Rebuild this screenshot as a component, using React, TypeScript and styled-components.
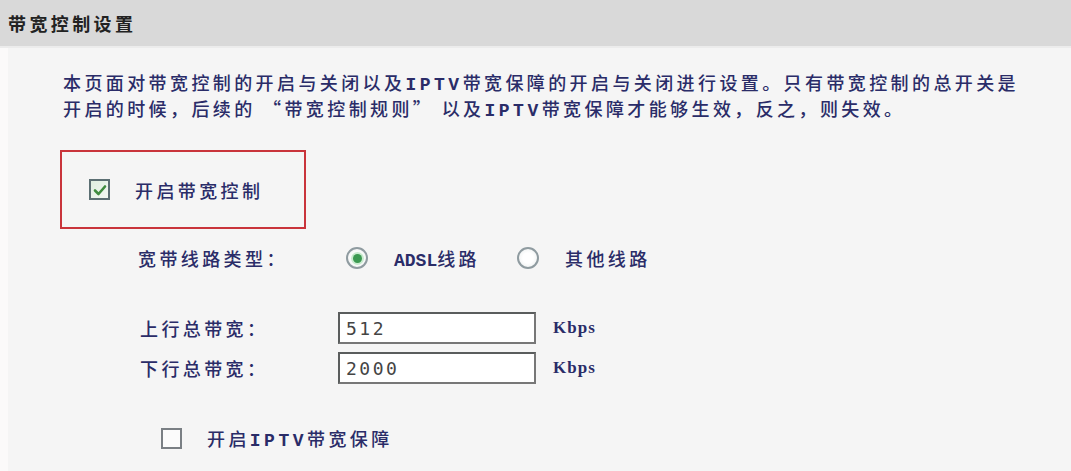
import styled, { createGlobalStyle } from "styled-components";

const GlobalStyle = createGlobalStyle`
  body {
    margin: 0;
    background-color: #f5f5f5;
    font-family: "Noto Sans CJK SC", "Noto Sans", sans-serif;
  }
`;

const Page = styled.div`
  width: 1071px;
  height: 471px;
  overflow: hidden;
  display: flex;
  flex-direction: column;
  background: linear-gradient(to right, #fbfafa 0, #fbfafa 8px, #f5f5f5 8px);
`;

const HeaderBar = styled.div`
  height: 46px;
  display: flex;
  align-items: center;
  padding-left: 8px;
  background-color: #d9d9d9;
  border-bottom: 2px solid #ececec;
  font-size: 18px;
  font-weight: 700;
  letter-spacing: 3.4px;
  color: #222;
`;

const Content = styled.div`
  display: flex;
  flex-direction: column;
  padding-left: 60px;
`;

const Intro = styled.div`
  margin: 21px 0 0 3px;
  display: flex;
  flex-direction: column;
`;

const IntroLine = styled.div`
  height: 26px;
  line-height: 26px;
  font-size: 18px;
  letter-spacing: 3.4px;
  font-weight: 500;
  color: #2a2c68;
  white-space: nowrap;
`;

const Latin = styled.span<{ $tight?: boolean }>`
  font-family: "Liberation Mono", monospace;
  font-weight: 700;
  line-height: 1;
  letter-spacing: ${(p) => (p.$tight ? "0" : "3.5px")};
`;

const HighlightBox = styled.div`
  box-sizing: border-box;
  width: 246px;
  height: 79px;
  margin-top: 29px;
  border: 2px solid #c9343b;
  display: flex;
  align-items: center;
  gap: 25px;
  padding-left: 27px;
`;

const CheckBox = styled.span<{ $checked?: boolean }>`
  box-sizing: border-box;
  width: 21px;
  height: 21px;
  display: inline-flex;
  align-items: center;
  justify-content: center;
  border: 2px solid ${(p) => (p.$checked ? "#5c6f73" : "#7a7f84")};
  background: ${(p) => (p.$checked ? "linear-gradient(135deg, #dfeee0, #f3f8f2)" : "#fbfbfb")};
  flex-shrink: 0;
`;

const Label = styled.span<{ $width?: number }>`
  display: inline-block;
  height: 26px;
  line-height: 26px;
  font-size: 18px;
  letter-spacing: 3.4px;
  font-weight: 500;
  color: #2a2c68;
  white-space: nowrap;
  ${(p) => (p.$width ? `width: ${p.$width}px;` : "")}
`;

const Settings = styled.div`
  display: flex;
  flex-direction: column;
  padding-left: 78px;
`;

const RadioRow = styled.div`
  display: flex;
  align-items: center;
  height: 26px;
  margin-top: 16px;
`;

const RadioOption = styled.label`
  display: flex;
  align-items: center;
  gap: 26px;
  margin-right: 37px;
`;

const Radio = styled.span<{ $checked?: boolean }>`
  box-sizing: border-box;
  width: 22px;
  height: 22px;
  border-radius: 50%;
  border: 2px solid #8f9ba0;
  background: radial-gradient(circle, #ffffff 40%, #e8ecec 100%);
  display: inline-flex;
  align-items: center;
  justify-content: center;
  &::after {
    content: "";
    display: ${(p) => (p.$checked ? "block" : "none")};
    width: 9px;
    height: 9px;
    border-radius: 50%;
    background: #3c9a52;
    box-shadow: 0 0 0 2px #c9ebcf;
  }
`;

const RateRows = styled.div`
  display: flex;
  flex-direction: column;
  gap: 8px;
  margin-top: 41px;
`;

const RateRow = styled.div`
  display: flex;
  align-items: center;
  margin-left: 2px;
`;

const RateInput = styled.input`
  box-sizing: border-box;
  width: 198px;
  height: 32px;
  padding: 0 6px;
  border: 2px solid #5a5d5d;
  border-right-color: #777;
  border-bottom-color: #777;
  background: #fff;
  font-family: "DejaVu Sans Mono", monospace;
  font-size: 18px;
  letter-spacing: 2.5px;
  color: #444;
  outline: none;
`;

const Unit = styled.span`
  margin-left: 17px;
  font-family: "Liberation Serif", serif;
  font-size: 17px;
  font-weight: 700;
  letter-spacing: 1px;
  color: #2a2c68;
`;

const IptvRow = styled.div`
  display: flex;
  align-items: center;
  gap: 25px;
  height: 26px;
  margin-top: 41px;
  margin-left: 23px;
`;

function Check() {
  return (
    <svg width="14" height="12" viewBox="0 0 14 12">
      <path d="M2 6.5 L5.5 10 L12 2.5" fill="none" stroke="#3f8c3f" strokeWidth="2.6" strokeLinecap="round" strokeLinejoin="round" />
    </svg>
  );
}

export default function App() {
  return (
    <>
      <GlobalStyle />
      <Page>
        <HeaderBar>带宽控制设置</HeaderBar>
        <Content>
          <Intro>
            <IntroLine>
              本页面对带宽控制的开启与关闭以及<Latin>IPTV</Latin>带宽保障的开启与关闭进行设置。只有带宽控制的总开关是
            </IntroLine>
            <IntroLine>
              开启的时候，后续的 “带宽控制规则” 以及<Latin>IPTV</Latin>带宽保障才能够生效，反之，则失效。
            </IntroLine>
          </Intro>
          <HighlightBox>
            <CheckBox $checked>
              <Check />
            </CheckBox>
            <Label>开启带宽控制</Label>
          </HighlightBox>
          <Settings>
            <RadioRow>
              <Label $width={208}>宽带线路类型：</Label>
              <RadioOption>
                <Radio $checked />
                <Label>
                  <Latin $tight>ADSL</Latin>线路
                </Label>
              </RadioOption>
              <RadioOption>
                <Radio />
                <Label>其他线路</Label>
              </RadioOption>
            </RadioRow>
            <RateRows>
              <RateRow>
                <Label $width={198}>上行总带宽：</Label>
                <RateInput defaultValue="512" />
                <Unit>Kbps</Unit>
              </RateRow>
              <RateRow>
                <Label $width={198}>下行总带宽：</Label>
                <RateInput defaultValue="2000" />
                <Unit>Kbps</Unit>
              </RateRow>
            </RateRows>
            <IptvRow>
              <CheckBox />
              <Label>
                开启<Latin>IPTV</Latin>带宽保障
              </Label>
            </IptvRow>
          </Settings>
        </Content>
      </Page>
    </>
  );
}
